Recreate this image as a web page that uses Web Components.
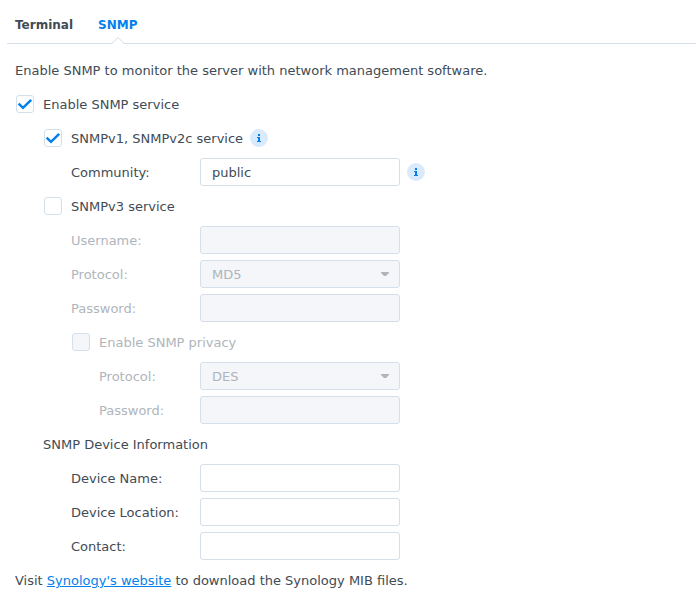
<!DOCTYPE html>
<html lang="en">
<head>
<meta charset="utf-8">
<title>Terminal &amp; SNMP</title>
<style>
  html { background: #fff; }
  body {
    margin: 0;
    font: 13px/28px Verdana, "DejaVu Sans", sans-serif;
    color: #414b55;
    --line: #d4dfe9;
    --accent: #057feb;
    --muted: #afb5bb;
    --off: #f4f6fa;
  }
</style>
</head>
<body>
<snmp-page></snmp-page>
<script>
const define = (name, cls) => customElements.define(name, cls);
const esc = s => (s || '').replace(/&/g, '&amp;').replace(/"/g, '&quot;').replace(/</g, '&lt;');

define('tab-bar', class extends HTMLElement {
  connectedCallback() {
    this.attachShadow({ mode: 'open' }).innerHTML = `
      <style>
        :host { display: block; padding-left: 7px; }
        nav { display: flex; gap: 25px; height: 43px; padding: 0 8px; border-bottom: 1px solid var(--line); }
        button { position: relative; border: 0; padding: 7px 0 0; margin: 0; background: none; color: inherit;
          font: bold 12px/36px Verdana, "DejaVu Sans", sans-serif; height: 43px; cursor: pointer; }
        button[aria-selected="true"] { color: var(--accent); }
        svg { position: absolute; left: 50%; bottom: -1px; margin-left: -7px; display: block; }
      </style>
      <nav role="tablist">
        <button role="tab" aria-selected="false">Terminal</button>
        <button role="tab" aria-selected="true">SNMP<svg width="14" height="7" viewBox="0 0 14 7"><path d="M1 7 L7 1 L13 7Z" fill="#fff"/><path d="M0.5 6.5 L7 0.7 L13.5 6.5" fill="none" stroke="#d4dfe9"/></svg></button>
      </nav>`;
  }
});

define('info-tip', class extends HTMLElement {
  connectedCallback() {
    this.attachShadow({ mode: 'open' }).innerHTML = `
      <style>
        :host { display: inline-flex; margin-left: 7px; }
        button { border: 0; padding: 0; margin: 0; width: 18px; height: 18px; border-radius: 9px; background: #d9eafd; cursor: pointer; }
        svg { display: block; }
      </style>
      <button aria-label="Information"><svg width="18" height="18" viewBox="0 0 18 18"><path d="M8 5h2v2H8zM7 8h3v4h1v1H7v-1h1V9H7z" fill="#057feb"/></svg></button>`;
  }
});

define('check-row', class extends HTMLElement {
  connectedCallback() {
    const on = this.hasAttribute('checked'), off = this.hasAttribute('disabled');
    this.attachShadow({ mode: 'open' }).innerHTML = `
      <style>
        :host { display: flex; align-items: center; height: 28px; }
        :host([level="1"]) { padding-left: 28px; }
        :host([level="2"]) { padding-left: 56px; }
        label { display: flex; align-items: center; }
        .box { display: grid; width: 18px; height: 18px; margin: 0 9px 0 1px; }
        .box > * { grid-area: 1 / 1; }
        .text { padding-top: 2px; }
        input { appearance: none; box-sizing: border-box; width: 18px; height: 18px; margin: 0; border: 1px solid var(--line); border-radius: 3px; background: #fff; }
        input:disabled { background: var(--off); }
        svg { pointer-events: none; visibility: hidden; }
        input:checked + svg { visibility: visible; }
        :host([disabled]) { color: var(--muted); }
      </style>
      <label><span class="box"><input type="checkbox" ${on ? 'checked' : ''} ${off ? 'disabled' : ''}><svg width="18" height="18" viewBox="0 0 18 18"><path d="M2.6 8.6 L7 12.8 L15.2 4.8" fill="none" stroke="#057feb" stroke-width="2.5"/></svg></span><span class="text"><slot></slot></span></label>
      <slot name="after"></slot>`;
  }
});

define('field-row', class extends HTMLElement {
  connectedCallback() {
    const off = this.hasAttribute('disabled') ? 'disabled' : '';
    const value = esc(this.getAttribute('value'));
    const control = this.getAttribute('type') === 'select'
      ? `<span class="drop"><select id="c" ${off}><option>${value}</option></select><svg width="10" height="5" viewBox="0 0 10 5"><path d="M1 0h8v1L6 4H4L1 1z" fill="#afb5bb"/></svg></span>`
      : `<input id="c" type="${this.getAttribute('type') || 'text'}" value="${value}" ${off}>`;
    this.attachShadow({ mode: 'open' }).innerHTML = `
      <style>
        :host { display: flex; align-items: center; height: 28px; --indent: 56px; padding-left: var(--indent); }
        :host([level="3"]) { --indent: 84px; }
        :host([disabled]) { color: var(--muted); }
        label { flex: none; width: calc(185px - var(--indent)); padding-top: 2px; }
        input, select { box-sizing: border-box; width: 200px; height: 28px; margin: 0; padding: 0 11px; border: 1px solid var(--line);
          border-radius: 3px; background: #fff; color: inherit; font: inherit; line-height: 26px; appearance: none; outline: 0; }
        select { padding-top: 1px; }
        input:disabled, select:disabled { background: var(--off); opacity: 1; color: var(--muted); }
        .drop { display: grid; align-items: center; }
        .drop > * { grid-area: 1 / 1; }
        .drop svg { justify-self: end; margin-right: 10px; pointer-events: none; }
      </style>
      <label for="c">${esc(this.getAttribute('label'))}</label>${control}<slot></slot>`;
  }
});

define('snmp-page', class extends HTMLElement {
  connectedCallback() {
    this.attachShadow({ mode: 'open' }).innerHTML = `
      <style>
        :host { display: block; }
        form { display: flex; flex-direction: column; gap: 6px; padding: 12px 15px 20px; }
        p, h2 { margin: 0; padding-top: 2px; font: inherit; line-height: 26px; }
        h2 { padding-left: 28px; }
        a { color: var(--accent); }
      </style>
      <tab-bar></tab-bar>
      <form>
        <p>Enable SNMP to monitor the server with network management software.</p>
        <check-row checked>Enable SNMP service</check-row>
        <check-row level="1" checked>SNMPv1, SNMPv2c service<info-tip slot="after"></info-tip></check-row>
        <field-row label="Community:" value="public"><info-tip></info-tip></field-row>
        <check-row level="1">SNMPv3 service</check-row>
        <field-row label="Username:" disabled></field-row>
        <field-row label="Protocol:" type="select" value="MD5" disabled></field-row>
        <field-row label="Password:" type="password" disabled></field-row>
        <check-row level="2" disabled>Enable SNMP privacy</check-row>
        <field-row level="3" label="Protocol:" type="select" value="DES" disabled></field-row>
        <field-row level="3" label="Password:" type="password" disabled></field-row>
        <h2>SNMP Device Information</h2>
        <field-row label="Device Name:"></field-row>
        <field-row label="Device Location:"></field-row>
        <field-row label="Contact:"></field-row>
        <p>Visit <a href="#">Synology's website</a> to download the Synology MIB files.</p>
      </form>`;
  }
});
</script>
</body>
</html>
